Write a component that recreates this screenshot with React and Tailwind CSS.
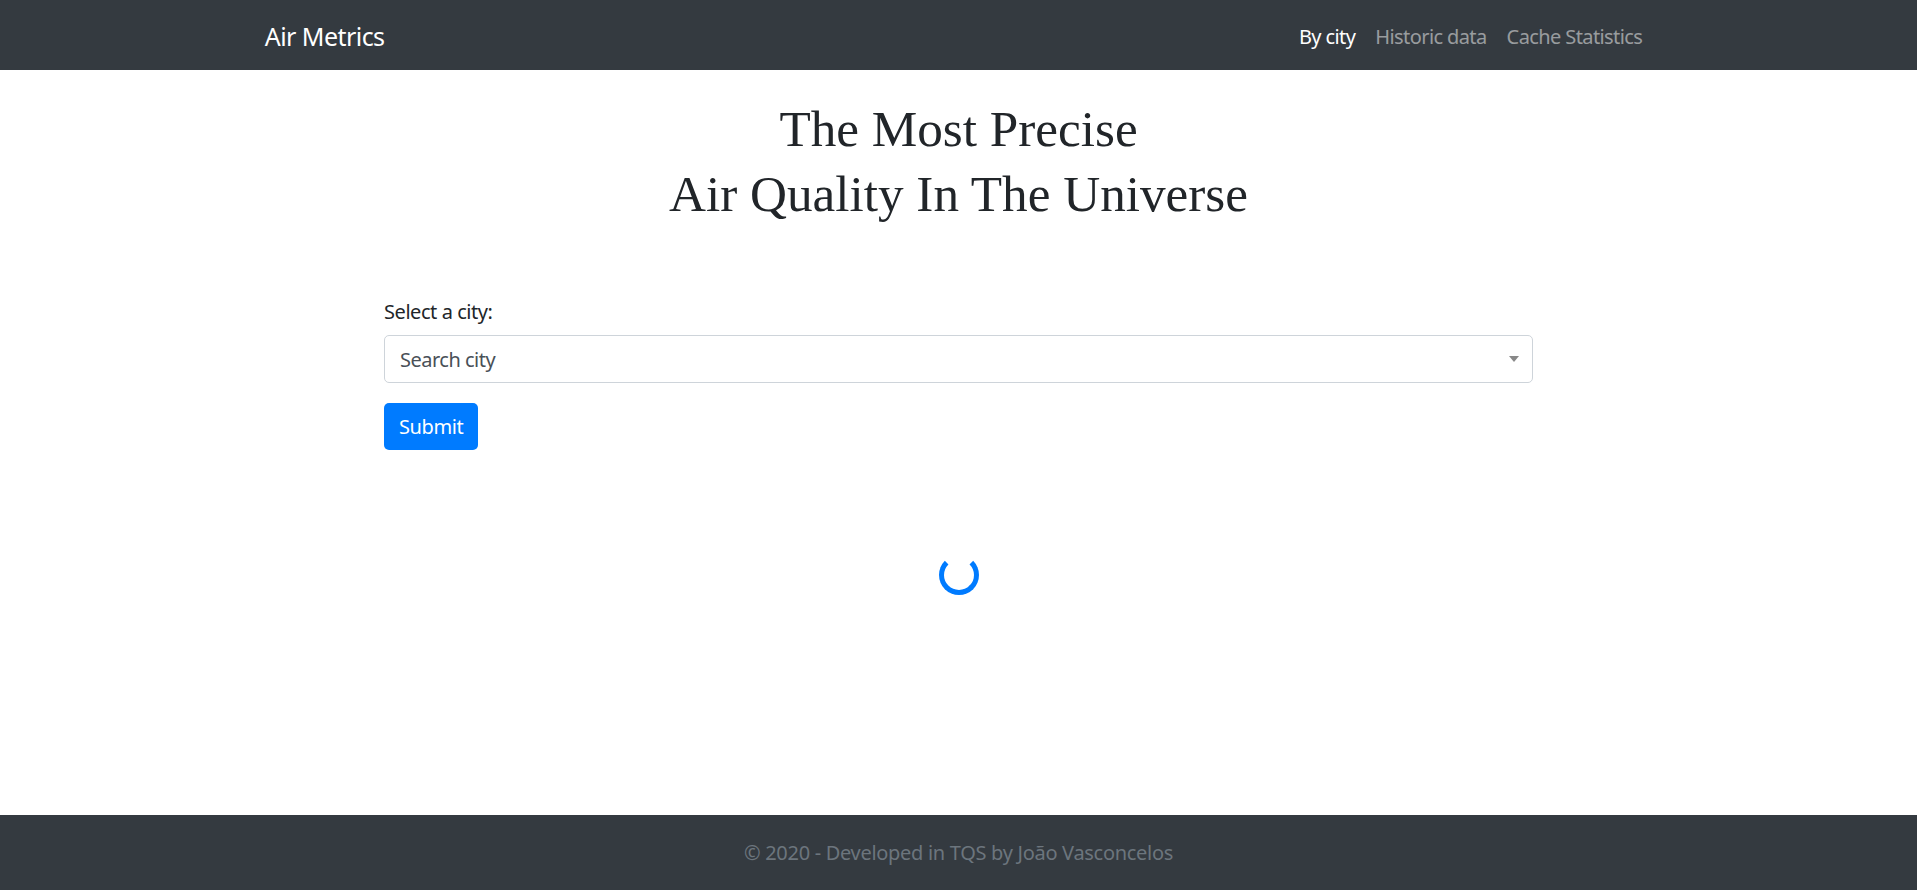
import React from 'react';

const navLinks = [
  { label: 'By city', active: true },
  { label: 'Historic data' },
  { label: 'Cache Statistics' },
];

export default function App() {
  return (
    <div className="min-h-screen flex flex-col bg-white text-[#212529] font-['Noto_Sans',sans-serif]">
      {/* navbar */}
      <nav className="h-[70px] bg-[#343a40] shrink-0">
        <div className="w-[1425px] h-full mx-auto px-[18.75px] flex items-center justify-between">
          <a href="#" className="mt-[2px] text-[25px] leading-[38px] tracking-[-0.55px] text-white">Air Metrics</a>
          <div className="flex items-center mt-[4px]">
            {navLinks.map((link) => (
              <a
                key={link.label}
                href="#"
                className={`px-[10px] text-[20px] leading-[30px] tracking-[-0.6px] ${link.active ? 'text-white' : 'text-white/50'}`}
              >
                {link.label}
              </a>
            ))}
          </div>
        </div>
      </nav>

      {/* main */}
      <main className="flex-1 flex flex-col">
        <h1 className="mt-[26px] text-center text-[51.2px] leading-[65px] text-[#212529] font-['Liberation_Serif',serif]">
          The Most Precise
          <br />
          Air Quality In The Universe
        </h1>

        <form className="w-[1149px] mx-auto mt-[69px]" onSubmit={(e) => e.preventDefault()}>
          <label className="block mt-[2px] mb-[8px] text-[20px] leading-[30px] tracking-[-0.44px]">Select a city:</label>
          <div className="h-[48px] mb-[20px] flex items-center justify-between border border-[#ced4da] rounded-[5px] pl-[15px] pr-[13px]">
            <span className="mt-[2px] text-[20px] tracking-[-0.5px] text-[#495057]">Search city</span>
            <span className="w-0 h-0 border-l-[5px] border-r-[5px] border-t-[6px] border-l-transparent border-r-transparent border-t-[#888]" />
          </div>
          <button
            type="submit"
            className="h-[47px] px-[15px] rounded-[5px] bg-[#007bff] text-white text-[20px] leading-[30px] tracking-[-0.4px]"
          >
            Submit
          </button>
        </form>

        <div className="flex justify-center mt-[105px]">
          <div className="w-[40px] h-[40px] rounded-full border-[5px] border-[#007bff] border-t-transparent" />
        </div>
      </main>

      {/* footer */}
      <footer className="h-[75px] shrink-0 bg-[#343a40] flex items-center justify-center">
        <span className="text-[20px] tracking-[-0.3px] text-[#6c757d]">© 2020 - Developed in TQS by João Vasconcelos</span>
      </footer>
    </div>
  );
}
